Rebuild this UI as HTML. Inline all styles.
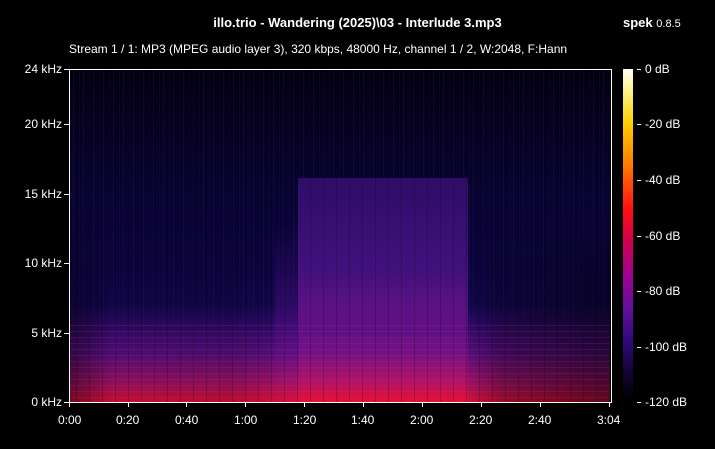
<!DOCTYPE html>
<html><head><style>
body{margin:0;background:#000;width:715px;height:449px;overflow:hidden;position:relative;font-family:"Liberation Sans",sans-serif;color:#fff;font-size:12px}
.a{position:absolute;white-space:nowrap}
#plot{position:absolute;left:70px;top:70px;width:540px;height:332px;overflow:hidden;
background:linear-gradient(to bottom,#020110 0%,#06032a 30%,#0c0540 60%,#180858 80%,#2a0a70 100%)}
.l{position:absolute}
.t{position:absolute;background:#fff}
</style></head><body>
<div class="a" style="left:0;width:715px;top:15px;text-align:center;font-weight:bold;font-size:13px">illo.trio - Wandering (2025)\03 - Interlude 3.mp3</div>
<div class="a" style="left:623px;top:15px;font-size:13px"><b>spek</b> <span style="font-size:11px">0.8.5</span></div>
<div class="a" style="left:69px;top:42px">Stream 1 / 1: MP3 (MPEG audio layer 3), 320 kbps, 48000 Hz, channel 1 / 2, W:2048, F:Hann</div>
<div id="plot">
 <div class="l" style="left:0;top:0;width:540px;height:332px;background:repeating-linear-gradient(to right,rgba(0,0,0,0) 0 3px,rgba(90,40,160,.15) 3px 4px,rgba(0,0,0,0) 4px 9px,rgba(60,20,120,.12) 9px 10px)"></div>
 <div class="l" style="left:228px;top:108px;width:170px;height:224px;background:linear-gradient(to bottom,rgba(50,14,110,.9) 0%,rgba(70,18,130,.9) 40%,rgba(120,20,140,.9) 70%,rgba(180,20,100,.9) 90%,#e01040 100%)"></div>
 <div class="l" style="left:205px;top:150px;width:25px;height:182px;background:linear-gradient(to bottom,rgba(40,10,100,0),rgba(90,16,140,.8))"></div>
 <div class="l" style="left:0;top:235px;width:540px;height:97px;background:linear-gradient(to bottom,rgba(60,12,120,0) 0%,rgba(80,14,130,.5) 25%,rgba(110,18,140,.7) 50%,rgba(180,20,100,.85) 80%,rgba(230,16,50,.95) 100%)"></div>
 <div class="l" style="left:0;top:0;width:540px;height:332px;background:linear-gradient(to right,rgba(0,0,0,.45) 0%,rgba(0,0,0,.1) 8%,rgba(0,0,0,.15) 30%,rgba(0,0,0,0) 42%,rgba(0,0,0,0) 73%,rgba(0,0,0,.3) 80%,rgba(0,0,0,.55) 100%);-webkit-mask:linear-gradient(to bottom,transparent 40%,#000 75%);mask:linear-gradient(to bottom,transparent 40%,#000 75%)"></div>
 <div class="l" style="left:0;top:250px;width:540px;height:82px;background:repeating-linear-gradient(to bottom,rgba(0,0,0,0) 0 5px,rgba(200,40,140,.2) 5px 6px)"></div>
 <div class="l" style="left:0;top:0;width:540px;height:332px;background:repeating-linear-gradient(to right,rgba(0,0,0,0) 0 6px,rgba(0,0,0,.2) 6px 7px,rgba(0,0,0,0) 7px 13px)"></div>
</div>
<div style="position:absolute;left:69px;top:69px;width:541px;height:332px;border:1px solid #fff"></div>
<div style="position:absolute;left:623px;top:69px;width:10px;height:333px;background:linear-gradient(to bottom,#fff 0%,#fff8a0 5%,#ffd000 16%,#ff8000 28%,#ff1010 42%,#d00050 52%,#a00090 62%,#6010a0 72%,#300878 82%,#100430 92%,#000 100%)"></div>
<div class="t" style="left:64px;top:69px;width:5px;height:1px"></div>
<div class="t" style="left:64px;top:124px;width:5px;height:1px"></div>
<div class="t" style="left:64px;top:194px;width:5px;height:1px"></div>
<div class="t" style="left:64px;top:263px;width:5px;height:1px"></div>
<div class="t" style="left:64px;top:333px;width:5px;height:1px"></div>
<div class="t" style="left:64px;top:402px;width:5px;height:1px"></div>
<div class="a" style="right:653px;top:62px">24 kHz</div>
<div class="a" style="right:653px;top:117px">20 kHz</div>
<div class="a" style="right:653px;top:187px">15 kHz</div>
<div class="a" style="right:653px;top:256px">10 kHz</div>
<div class="a" style="right:653px;top:326px">5 kHz</div>
<div class="a" style="right:653px;top:395px">0 kHz</div>
<div class="t" style="left:69px;top:402px;width:1px;height:5px"></div>
<div class="t" style="left:128px;top:402px;width:1px;height:5px"></div>
<div class="t" style="left:186px;top:402px;width:1px;height:5px"></div>
<div class="t" style="left:245px;top:402px;width:1px;height:5px"></div>
<div class="t" style="left:304px;top:402px;width:1px;height:5px"></div>
<div class="t" style="left:363px;top:402px;width:1px;height:5px"></div>
<div class="t" style="left:422px;top:402px;width:1px;height:5px"></div>
<div class="t" style="left:481px;top:402px;width:1px;height:5px"></div>
<div class="t" style="left:540px;top:402px;width:1px;height:5px"></div>
<div class="t" style="left:609px;top:402px;width:1px;height:5px"></div>
<div class="a" style="left:58px;top:413px">0:00</div>
<div class="a" style="left:116px;top:413px">0:20</div>
<div class="a" style="left:175px;top:413px">0:40</div>
<div class="a" style="left:234px;top:413px">1:00</div>
<div class="a" style="left:293px;top:413px">1:20</div>
<div class="a" style="left:351px;top:413px">1:40</div>
<div class="a" style="left:410px;top:413px">2:00</div>
<div class="a" style="left:469px;top:413px">2:20</div>
<div class="a" style="left:528px;top:413px">2:40</div>
<div class="a" style="left:597px;top:413px">3:04</div>
<div class="t" style="left:637px;top:69px;width:4px;height:1px"></div>
<div class="t" style="left:637px;top:124px;width:4px;height:1px"></div>
<div class="t" style="left:637px;top:180px;width:4px;height:1px"></div>
<div class="t" style="left:637px;top:236px;width:4px;height:1px"></div>
<div class="t" style="left:637px;top:291px;width:4px;height:1px"></div>
<div class="t" style="left:637px;top:347px;width:4px;height:1px"></div>
<div class="t" style="left:637px;top:402px;width:4px;height:1px"></div>
<div class="a" style="left:645px;top:62px">0 dB</div>
<div class="a" style="left:645px;top:117px">-20 dB</div>
<div class="a" style="left:645px;top:173px">-40 dB</div>
<div class="a" style="left:645px;top:229px">-60 dB</div>
<div class="a" style="left:645px;top:284px">-80 dB</div>
<div class="a" style="left:645px;top:340px">-100 dB</div>
<div class="a" style="left:645px;top:395px">-120 dB</div>
</body></html>
